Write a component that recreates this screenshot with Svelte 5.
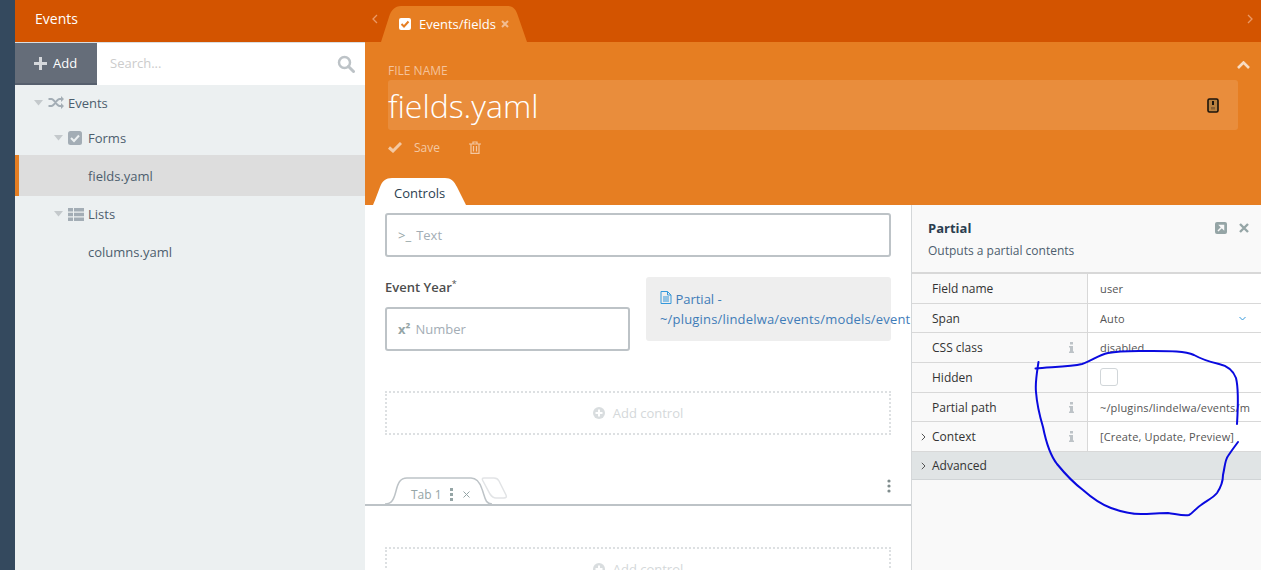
<script>
  const rows = [
    { label: 'Field name', value: 'user' },
    { label: 'Span', value: 'Auto', select: true },
    { label: 'CSS class', value: 'disabled', info: true },
    { label: 'Hidden', check: true },
    { label: 'Partial path', value: '~/plugins/lindelwa/events/m', info: true },
    { label: 'Context', value: '[Create, Update, Preview]', info: true, arrow: true }
  ];
</script>

{#snippet drop()}
  <svg class="drop" width="10" height="6" viewBox="0 0 10 6"><path d="M0 0h9L4.500 5.500z" fill="#c4c9cc" /></svg>
{/snippet}

<div class="page">
  <div class="rail"></div>

  <aside class="sidebar">
    <div class="brand">Events</div>
    <div class="toolbar">
      <button class="add">
        <svg width="13" height="13" viewBox="0 0 13 13"><path d="M5 0h3v5h5v3H8v5H5V8H0V5h5z" fill="#d5d8dc" /></svg>
        Add
      </button>
      <div class="search">
        <span>Search...</span>
        <svg width="18" height="18" viewBox="0 0 18 18" fill="none" stroke="#bdc3c7"><circle cx="7.500" cy="7.500" r="5.500" stroke-width="2.500" /><path d="M11.500 11.500l5 5" stroke-width="3" stroke-linecap="round" /></svg>
      </div>
    </div>
    <ul class="tree">
      <li class="node lvl0">
        {@render drop()}
        <svg class="ico shuffle" width="17" height="13" viewBox="0 0 16 13" fill="none" stroke="#a3adb5" stroke-width="2"><path d="M0 3h3c3 0 5 7 8 7h2M0 10h3c3 0 5-7 8-7h2" /><path d="M12.500 0v6l3-3zM12.500 7v6l3-3z" fill="#a3adb5" stroke="none" /></svg>
        Events
      </li>
      <li class="node lvl1">
        {@render drop()}
        <svg class="ico" width="14" height="14" viewBox="0 0 14 14"><rect width="14" height="14" rx="2.500" fill="#a3adb5" /><path d="M3 7l3 3 5-5.500" fill="none" stroke="#ecf0f1" stroke-width="2" /></svg>
        Forms
      </li>
      <li class="file active">fields.yaml</li>
      <li class="node lvl1 lists">
        {@render drop()}
        <svg class="ico" width="16" height="13" viewBox="0 0 16 13" fill="#a3adb5"><path d="M0 0h5v3.500H0zM6 0h10v3.500H6zM0 4.700h5v3.600H0zM6 4.700h10v3.600H6zM0 9.500h5V13H0zM6 9.500h10V13H6z" /></svg>
        Lists
      </li>
      <li class="file">columns.yaml</li>
    </ul>
  </aside>

  <main class="main">
    <div class="topbar">
      <svg class="nav" width="6" height="10" viewBox="0 0 6 10" fill="none" stroke="#eb9a66" stroke-width="1.300"><path d="M5 1L1 5l4 4" /></svg>
      <div class="doc-tab">
        <svg class="tab-bg" width="146" height="36" viewBox="0 0 146 36"><path d="M0 36L8 11C10 4 14 0 20 0H126C132 0 135 3 137 10L146 36Z" fill="#e67e22" /></svg>
        <svg class="tab-check" width="12" height="12" viewBox="0 0 12 12"><rect width="12" height="12" rx="2" fill="#fff" /><path d="M2.500 6l2.500 2.500 4.500-5" fill="none" stroke="#e67e22" stroke-width="2" /></svg>
        <span>Events/fields</span>
        <svg class="tab-x" width="8" height="8" viewBox="0 0 8 8" stroke="#f2bd91" stroke-width="2"><path d="M1 1l6 6M7 1L1 7" /></svg>
      </div>
      <svg class="nav right" width="6" height="10" viewBox="0 0 6 10" fill="none" stroke="#eb9a66" stroke-width="1.300"><path d="M1 1l4 4-4 4" /></svg>
    </div>

    <header class="head">
      <div class="label-row">
        <span>FILE NAME</span>
        <svg width="13" height="8" viewBox="0 0 13 8" fill="none" stroke="#f8dcc3" stroke-width="2.600"><path d="M1 7l5.500-5.500L12 7" /></svg>
      </div>
      <div class="name">
        <span>fields.yaml</span>
        <svg width="12" height="15" viewBox="0 0 12 15"><rect x="1" y="1" width="10" height="13" rx="1.500" fill="#b9803f" stroke="#1b130b" stroke-width="1.600" /><path d="M5 3h2v4H5z" fill="#1b130b" /><path d="M4 9h4v2.500H4z" fill="#8a6033" /></svg>
      </div>
      <div class="actions">
        <svg width="14" height="11" viewBox="0 0 14 11" fill="none" stroke="#f4c8a2" stroke-width="3"><path d="M1 5.500l4 3.500 8-8" /></svg>
        <span class="save">Save</span>
        <svg class="trash" width="12" height="13" viewBox="0 0 12 13" fill="none" stroke="#f4c8a2" stroke-width="1.200"><path d="M0 3h12M4 3V1h4v2M2 3v9.400h8V3M4.500 5v5.500M7.500 5v5.500" /></svg>
      </div>
      <div class="controls-tab">
        <svg class="tab-bg" width="94" height="27" viewBox="0 0 94 27"><path d="M0 27C3 20 5 14 7 9 9 3 13 0 19 0H72C78 0 81 3 84 9L93 27Z" fill="#fff" /></svg>
        <span>Controls</span>
      </div>
    </header>

    <div class="body">
      <section class="canvas">
        <div class="field wide"><span class="glyph">&gt;_</span> Text</div>

        <div class="two">
          <div class="col">
            <div class="caption">Event Year<sup>*</sup></div>
            <div class="field"><b class="glyph">x²</b> Number</div>
          </div>
          <div class="partial">
            <div>
              <svg width="12" height="13" viewBox="0 0 12 13" fill="none" stroke="#3498db" stroke-width="1"><path d="M1 .500h6.500L11 4v8.500H1zM7.500.500V4H11M3 6h6M3 8h6M3 10h6" /></svg>
              Partial -
            </div>
            <div class="path">~/plugins/lindelwa/events/models/event</div>
          </div>
        </div>

        <div class="placeholder">
          <svg width="12" height="12" viewBox="0 0 12 12"><circle cx="6" cy="6" r="6" fill="#d9dddf" /><path d="M5 2.500h2V5h2.500v2H7v2.500H5V7H2.500V5H5z" fill="#fff" /></svg>
          Add control
        </div>

        <div class="tabs">
          <div class="tab1">
            <svg class="tab-bg" width="107" height="28" viewBox="0 0 107 28" fill="#fff" stroke="#bdc3c7" stroke-width="1.500"><path d="M0 27C7 27 9 22 11 14 13 6 15 1 22 1H86C92 1 95 6 97 12 100 20 100 27 107 27" /></svg>
            <span>Tab 1</span>
            <svg width="3" height="13" viewBox="0 0 3 13" fill="#95a5a6"><path d="M0 0h3v3H0zM0 5h3v3H0zM0 10h3v3H0z" /></svg>
            <svg class="tab-close" width="7" height="7" viewBox="0 0 7 7" stroke="#95a5a6" stroke-width="1"><path d="M.500.500l6 6M6.500.500l-6 6" /></svg>
          </div>
          <svg class="ghost" width="27" height="22" viewBox="0 0 27 22" fill="none" stroke="#e2e4e6" stroke-width="1.500"><path d="M3 1h10c3 0 4 1 5 3l7 14c1 2 0 3-2 3H15c-3 0-4-1-6-4L2 4C1 2 1 1 3 1z" /></svg>
          <svg class="more" width="4" height="14" viewBox="0 0 4 14" fill="#7f8c8d"><circle cx="2" cy="2" r="1.600" /><circle cx="2" cy="7" r="1.600" /><circle cx="2" cy="12" r="1.600" /></svg>
        </div>

        <div class="placeholder second">
          <svg width="12" height="12" viewBox="0 0 12 12"><circle cx="6" cy="6" r="6" fill="#d9dddf" /><path d="M5 2.500h2V5h2.500v2H7v2.500H5V7H2.500V5H5z" fill="#fff" /></svg>
          Add control
        </div>
      </section>

      <aside class="inspector">
        <div class="ins-head">
          <div class="ins-title">
            <strong>Partial</strong>
            <svg width="12" height="12" viewBox="0 0 12 12"><rect width="12" height="12" rx="2" fill="#95a5a6" /><path d="M3 9l4-4M5 3.500h3.500V7z" stroke="#f9f9f9" stroke-width="1.500" fill="#f9f9f9" /></svg>
            <svg class="ins-x" width="10" height="10" viewBox="0 0 10 10" stroke="#95a5a6" stroke-width="2.400"><path d="M1 1l8 8M9 1L1 9" /></svg>
          </div>
          <p>Outputs a partial contents</p>
        </div>
        <div class="props">
          {#each rows as row}
            <div class="prop">
              <div class="key">
                {#if row.arrow}<svg class="chev" width="5" height="8" viewBox="0 0 5 8" fill="none" stroke="#555" stroke-width="1"><path d="M.800.800L4 4 .800 7.200" /></svg>{/if}
                <span>{row.label}</span>
                {#if row.info}<svg class="info" width="5" height="11" viewBox="0 0 5 11" fill="#bdc3c7"><path d="M1 0h3v2.500H1zM0 4h4v5.500h1V11H0V9.500h1V5.500H0z" /></svg>{/if}
              </div>
              <div class="val">
                {#if row.check}
                  <span class="box"></span>
                {:else}
                  <span class="txt">{row.value}</span>
                {/if}
                {#if row.select}<svg class="sel" width="7" height="5" viewBox="0 0 7 5" fill="none" stroke="#3498db" stroke-width="1"><path d="M.500 1l3 3 3-3" /></svg>{/if}
              </div>
            </div>
          {/each}
          <div class="advanced">
            <svg class="chev" width="5" height="8" viewBox="0 0 5 8" fill="none" stroke="#555" stroke-width="1"><path d="M.800.800L4 4 .800 7.200" /></svg>
            Advanced
          </div>
        </div>
      </aside>
    </div>
  </main>

  <!-- hand-drawn pen annotation over the screenshot -->
  <svg class="pen" width="1261" height="570" viewBox="0 0 1261 570" fill="none" stroke="#0a0adf" stroke-width="2" stroke-linecap="round" stroke-linejoin="round">
    <path d="M1035.500 368.500C1050 367 1070 367 1082 364 1092 361 1098 355 1108 353 1122 350 1140 351 1153 351 1170 351 1185 351 1194 355 1203 360 1210 362 1219 364 1228 366 1233 370 1236 378 1239 390 1238 408 1237 424" />
    <path d="M1038.500 362C1037 372 1035 382 1036 392 1037 405 1040 417 1043 427 1046 442 1050 455 1057 464 1066 475 1075 484 1083 490 1092 498 1100 504 1111 508 1122 512 1132 514 1141 514 1150 514 1160 513 1168 513 1176 514 1183 516 1189 515 1193 513 1196 508 1201 505 1206 501 1213 498 1217 493 1221 487 1223 480 1223 475 1225 466 1225 460 1228 456 1232 450 1235 446 1238 442" />
  </svg>
</div>

<style>
  :global(body) {
    margin: 0;
  }

  .page {
    position: relative;
    display: flex;
    width: 1261px;
    height: 570px;
    overflow: hidden;
    background: #fff;
    color: #2b3e50;
    font-family: "Open Sans", "Liberation Sans", sans-serif;
    font-size: 13px;
  }

  .rail {
    width: 15px;
    flex: none;
    background: #34495e;
  }

  .sidebar {
    width: 350px;
    flex: none;
    background: #ecf0f1;
  }

  .brand {
    height: 42px;
    padding-left: 20px;
    background: #d35400;
    color: #fff;
    font-size: 14px;
    line-height: 38px;
    box-sizing: border-box;
  }

  .toolbar {
    display: flex;
    height: 43px;
    box-sizing: border-box;
    border-top: 1px solid #d9dee0;
    background: #fff;
  }

  .add {
    display: flex;
    align-items: center;
    gap: 6px;
    width: 82px;
    padding: 0 0 0 19px;
    border: 0;
    border-bottom: 2px solid #565f6d;
    background: #656d79;
    color: #fff;
    font: inherit;
  }

  .search {
    flex: 1;
    display: flex;
    align-items: center;
    justify-content: space-between;
    padding: 0 10px 0 13px;
    color: #ccc;
  }

  .search span {
    margin-top: -2px;
  }

  .tree {
    margin: 0;
    padding: 0;
    list-style: none;
    color: #4d5e6e;
  }

  .node {
    display: flex;
    align-items: center;
    height: 35px;
  }

  .lvl0 {
    padding-left: 19px;
  }

  .lvl1 {
    padding-left: 39px;
  }

  .lists {
    height: 36px;
  }

  .drop {
    margin-right: 4px;
  }

  .ico {
    margin-right: 4px;
  }

  .shuffle {
    margin-right: 3px;
  }

  .lvl1 .ico {
    margin-right: 6px;
  }

  .lists.lvl1 .ico {
    margin-right: 4px;
  }

  .file {
    height: 38px;
    padding-left: 73px;
    line-height: 40px;
  }

  .active {
    height: 41px;
    padding-left: 69px;
    border-left: 4px solid #e67e22;
    background: #dddddd;
    line-height: 42px;
  }

  .main {
    flex: 1;
    display: flex;
    flex-direction: column;
    min-width: 0;
  }

  .topbar {
    display: flex;
    align-items: flex-end;
    height: 42px;
    flex: none;
    background: #d35400;
  }

  .nav {
    align-self: center;
    margin: -4px 0 0 7px;
  }

  .nav.right {
    margin: -4px 8px 0 auto;
  }

  .doc-tab {
    position: relative;
    display: flex;
    align-items: center;
    width: 146px;
    height: 36px;
    margin-left: 3px;
    padding-left: 18px;
    box-sizing: border-box;
    color: #fff;
  }

  .tab-bg {
    position: absolute;
    left: 0;
    top: 0;
  }

  .doc-tab span,
  .tab-check,
  .tab-x {
    position: relative;
  }

  .tab-check {
    margin-right: 8px;
  }

  .tab-x {
    margin-left: 5px;
  }

  .head {
    height: 163px;
    flex: none;
    box-sizing: border-box;
    padding: 22px 23px 0;
    background: #e67e22;
    display: flex;
    flex-direction: column;
  }

  .label-row {
    display: flex;
    justify-content: space-between;
    align-items: flex-start;
    height: 16px;
    color: #f4c29a;
    font-size: 12px;
    line-height: 14px;
  }

  .label-row svg {
    margin: -3px -12px 0 0;
  }

  .name {
    display: flex;
    align-items: center;
    justify-content: space-between;
    height: 50px;
    padding-right: 19px;
    border-radius: 3px;
    background: rgba(255, 255, 255, 0.12);
    color: #fff;
    font-size: 32px;
    font-weight: 300;
  }

  .actions {
    display: flex;
    align-items: center;
    margin-top: 9px;
    height: 16px;
    color: #f4c8a2;
    font-size: 12px;
  }

  .save {
    margin-left: 12px;
  }

  .trash {
    margin-left: 29px;
  }

  .controls-tab {
    position: relative;
    width: 94px;
    height: 27px;
    margin: 23px 0 0 -15px;
    box-sizing: border-box;
    padding-left: 21px;
    line-height: 30px;
  }

  .controls-tab span {
    position: relative;
  }

  .body {
    flex: 1;
    display: flex;
    min-height: 0;
  }

  .canvas {
    width: 546px;
    flex: none;
    box-sizing: border-box;
    padding: 8px 20px 0;
    overflow: hidden;
  }

  .field {
    display: flex;
    align-items: center;
    gap: 5px;
    height: 44px;
    box-sizing: border-box;
    padding-left: 11px;
    border: 2px solid #bdc3c7;
    border-radius: 3px;
    color: #a3adb5;
  }

  .glyph {
    color: #95a5a6;
  }

  .two {
    display: grid;
    grid-template-columns: 245px 245px;
    gap: 16px;
    margin-top: 20px;
  }

  .caption {
    height: 30px;
    color: #4d4d4d;
    font-weight: 600;
    line-height: 20px;
  }

  sup {
    font-size: 9px;
    font-weight: 400;
    line-height: 0;
  }

  .partial {
    width: 245px;
    height: 64px;
    box-sizing: border-box;
    padding: 12px 14px;
    border-radius: 3px;
    background: #eeeeee;
    color: #3f7cb8;
    line-height: 20px;
    white-space: nowrap;
  }

  .path {
    letter-spacing: 0.18px;
  }

  .placeholder {
    display: flex;
    align-items: center;
    justify-content: center;
    gap: 8px;
    height: 44px;
    margin-top: 40px;
    box-sizing: border-box;
    border: 2px dotted #dde0e2;
    color: #d4d8da;
  }

  .second {
    margin-top: 41px;
  }

  .tabs {
    position: relative;
    display: flex;
    align-items: flex-end;
    height: 28px;
    margin: 41px -20px 0;
    padding-left: 20px;
    border-bottom: 2px solid #bdc3c7;
  }

  .tab1 {
    position: relative;
    display: flex;
    align-items: center;
    gap: 8px;
    width: 107px;
    height: 28px;
    box-sizing: border-box;
    padding: 7px 0 0 26px;
    margin-bottom: -1px;
    color: #95a5a6;
    font-size: 12px;
  }

  .tab1 span,
  .tab1 svg:not(.tab-bg) {
    position: relative;
  }

  .tab-close {
    margin-left: 2px;
  }

  .ghost {
    margin: 0 0 5px -11px;
  }

  .more {
    margin: 0 20px 11px auto;
  }

  .inspector {
    flex: 1;
    min-width: 0;
    background: #f9f9f9;
    border-left: 1px solid #d4d7d9;
  }

  .ins-head {
    height: 69px;
    box-sizing: border-box;
    padding: 14px 11px 0 16px;
    border-bottom: 2px solid #d8d8d8;
  }

  .ins-title {
    display: flex;
    align-items: center;
    color: #2b3e50;
  }

  .ins-title strong {
    flex: 1;
    font-weight: 700;
    font-size: 13px;
  }

  .ins-x {
    margin-left: 12px;
    margin-right: 1px;
  }

  .ins-head p {
    margin: 5px 0 0;
    font-size: 12px;
    color: #4d5e6e;
  }

  .prop {
    display: flex;
    height: 29.700px;
    box-sizing: border-box;
    border-bottom: 1px solid #d8d8d8;
    font-size: 12px;
  }

  .key {
    position: relative;
    display: flex;
    align-items: center;
    justify-content: space-between;
    width: 176px;
    flex: none;
    box-sizing: border-box;
    padding: 0 13px 0 20px;
    border-right: 1px solid #d8d8d8;
    color: #333;
    font-weight: 500;
  }

  .chev {
    position: absolute;
    left: 9px;
    top: 50%;
    margin-top: -4px;
  }

  .val {
    flex: 1;
    min-width: 0;
    display: flex;
    align-items: center;
    justify-content: space-between;
    padding: 0 12px;
    background: #fff;
    color: #555;
    font-size: 11px;
    letter-spacing: 0.15px;
  }

  .txt {
    white-space: nowrap;
  }

  .box {
    width: 18px;
    height: 18px;
    box-sizing: border-box;
    border: 1px solid #d1d6d9;
    border-radius: 3px;
    background: #fff;
  }

  .sel {
    flex: none;
    margin-right: 3px;
  }

  .advanced {
    position: relative;
    height: 28px;
    box-sizing: border-box;
    padding-left: 20px;
    border-bottom: 1px solid #d0d4d6;
    background: #e0e4e5;
    color: #333;
    font-size: 12px;
    line-height: 28px;
  }

  .pen {
    position: absolute;
    left: 0;
    top: 0;
    pointer-events: none;
  }
</style>
